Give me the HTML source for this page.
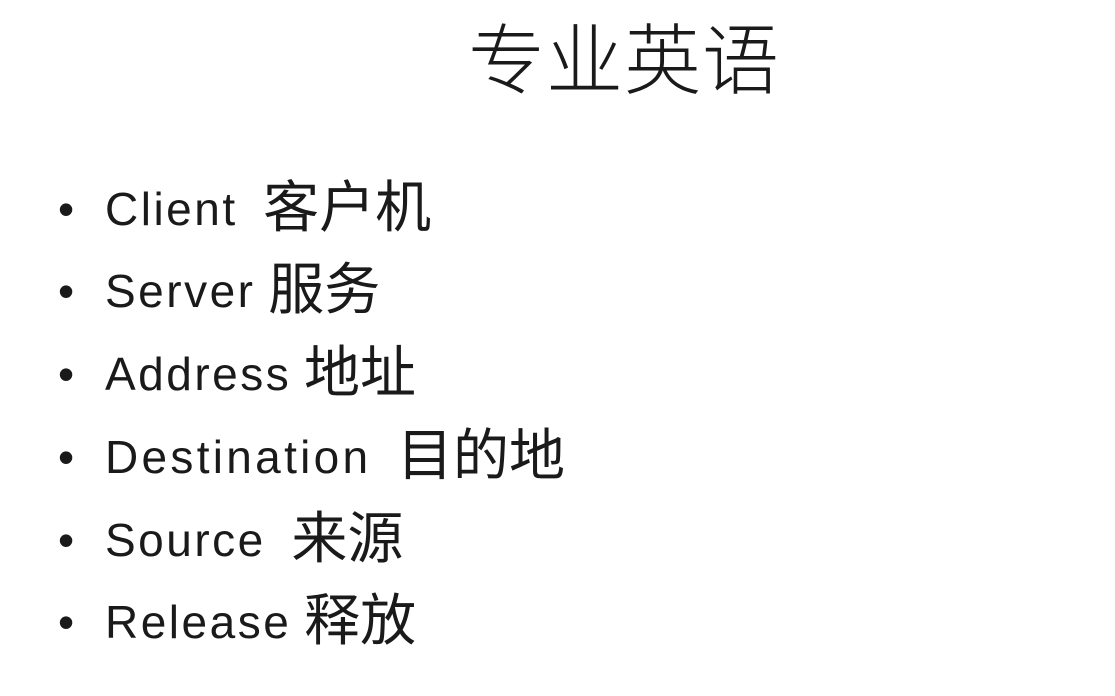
<!DOCTYPE html>
<html><head><meta charset="utf-8"><style>
html,body{margin:0;padding:0;background:#fff;width:1115px;height:696px;overflow:hidden}
.t{position:absolute;left:468px;top:0px;font:300 77px "Liberation Sans","Noto Sans CJK SC",sans-serif;color:#1a1a1a;white-space:nowrap;letter-spacing:1px}
.l{position:absolute;left:58px;height:60px;line-height:60px;font-size:46px;font-family:"Liberation Sans","Noto Sans CJK SC",sans-serif;color:#1a1a1a;white-space:nowrap}
.b{display:inline-block;width:47px;font-size:46px}
.e{letter-spacing:2.5px}
.c{font-size:56px;vertical-align:-2px}
</style></head><body>
<div class="t">专业英语</div>
<div class="l" style="top:178px"><span class="b">•</span><span class="e">Client</span>&nbsp;&nbsp;<span class="c">客户机</span></div>
<div class="l" style="top:260px"><span class="b">•</span><span class="e">Server</span> <span class="c">服务</span></div>
<div class="l" style="top:343px"><span class="b">•</span><span class="e">Address</span> <span class="c">地址</span></div>
<div class="l" style="top:426px"><span class="b">•</span><span class="e" style="letter-spacing:3.3px">Destination</span>&nbsp;&nbsp;<span class="c">目的地</span></div>
<div class="l" style="top:509px"><span class="b">•</span><span class="e">Source</span>&nbsp;&nbsp;<span class="c">来源</span></div>
<div class="l" style="top:591px"><span class="b">•</span><span class="e">Release</span> <span class="c">释放</span></div>
</body></html>
